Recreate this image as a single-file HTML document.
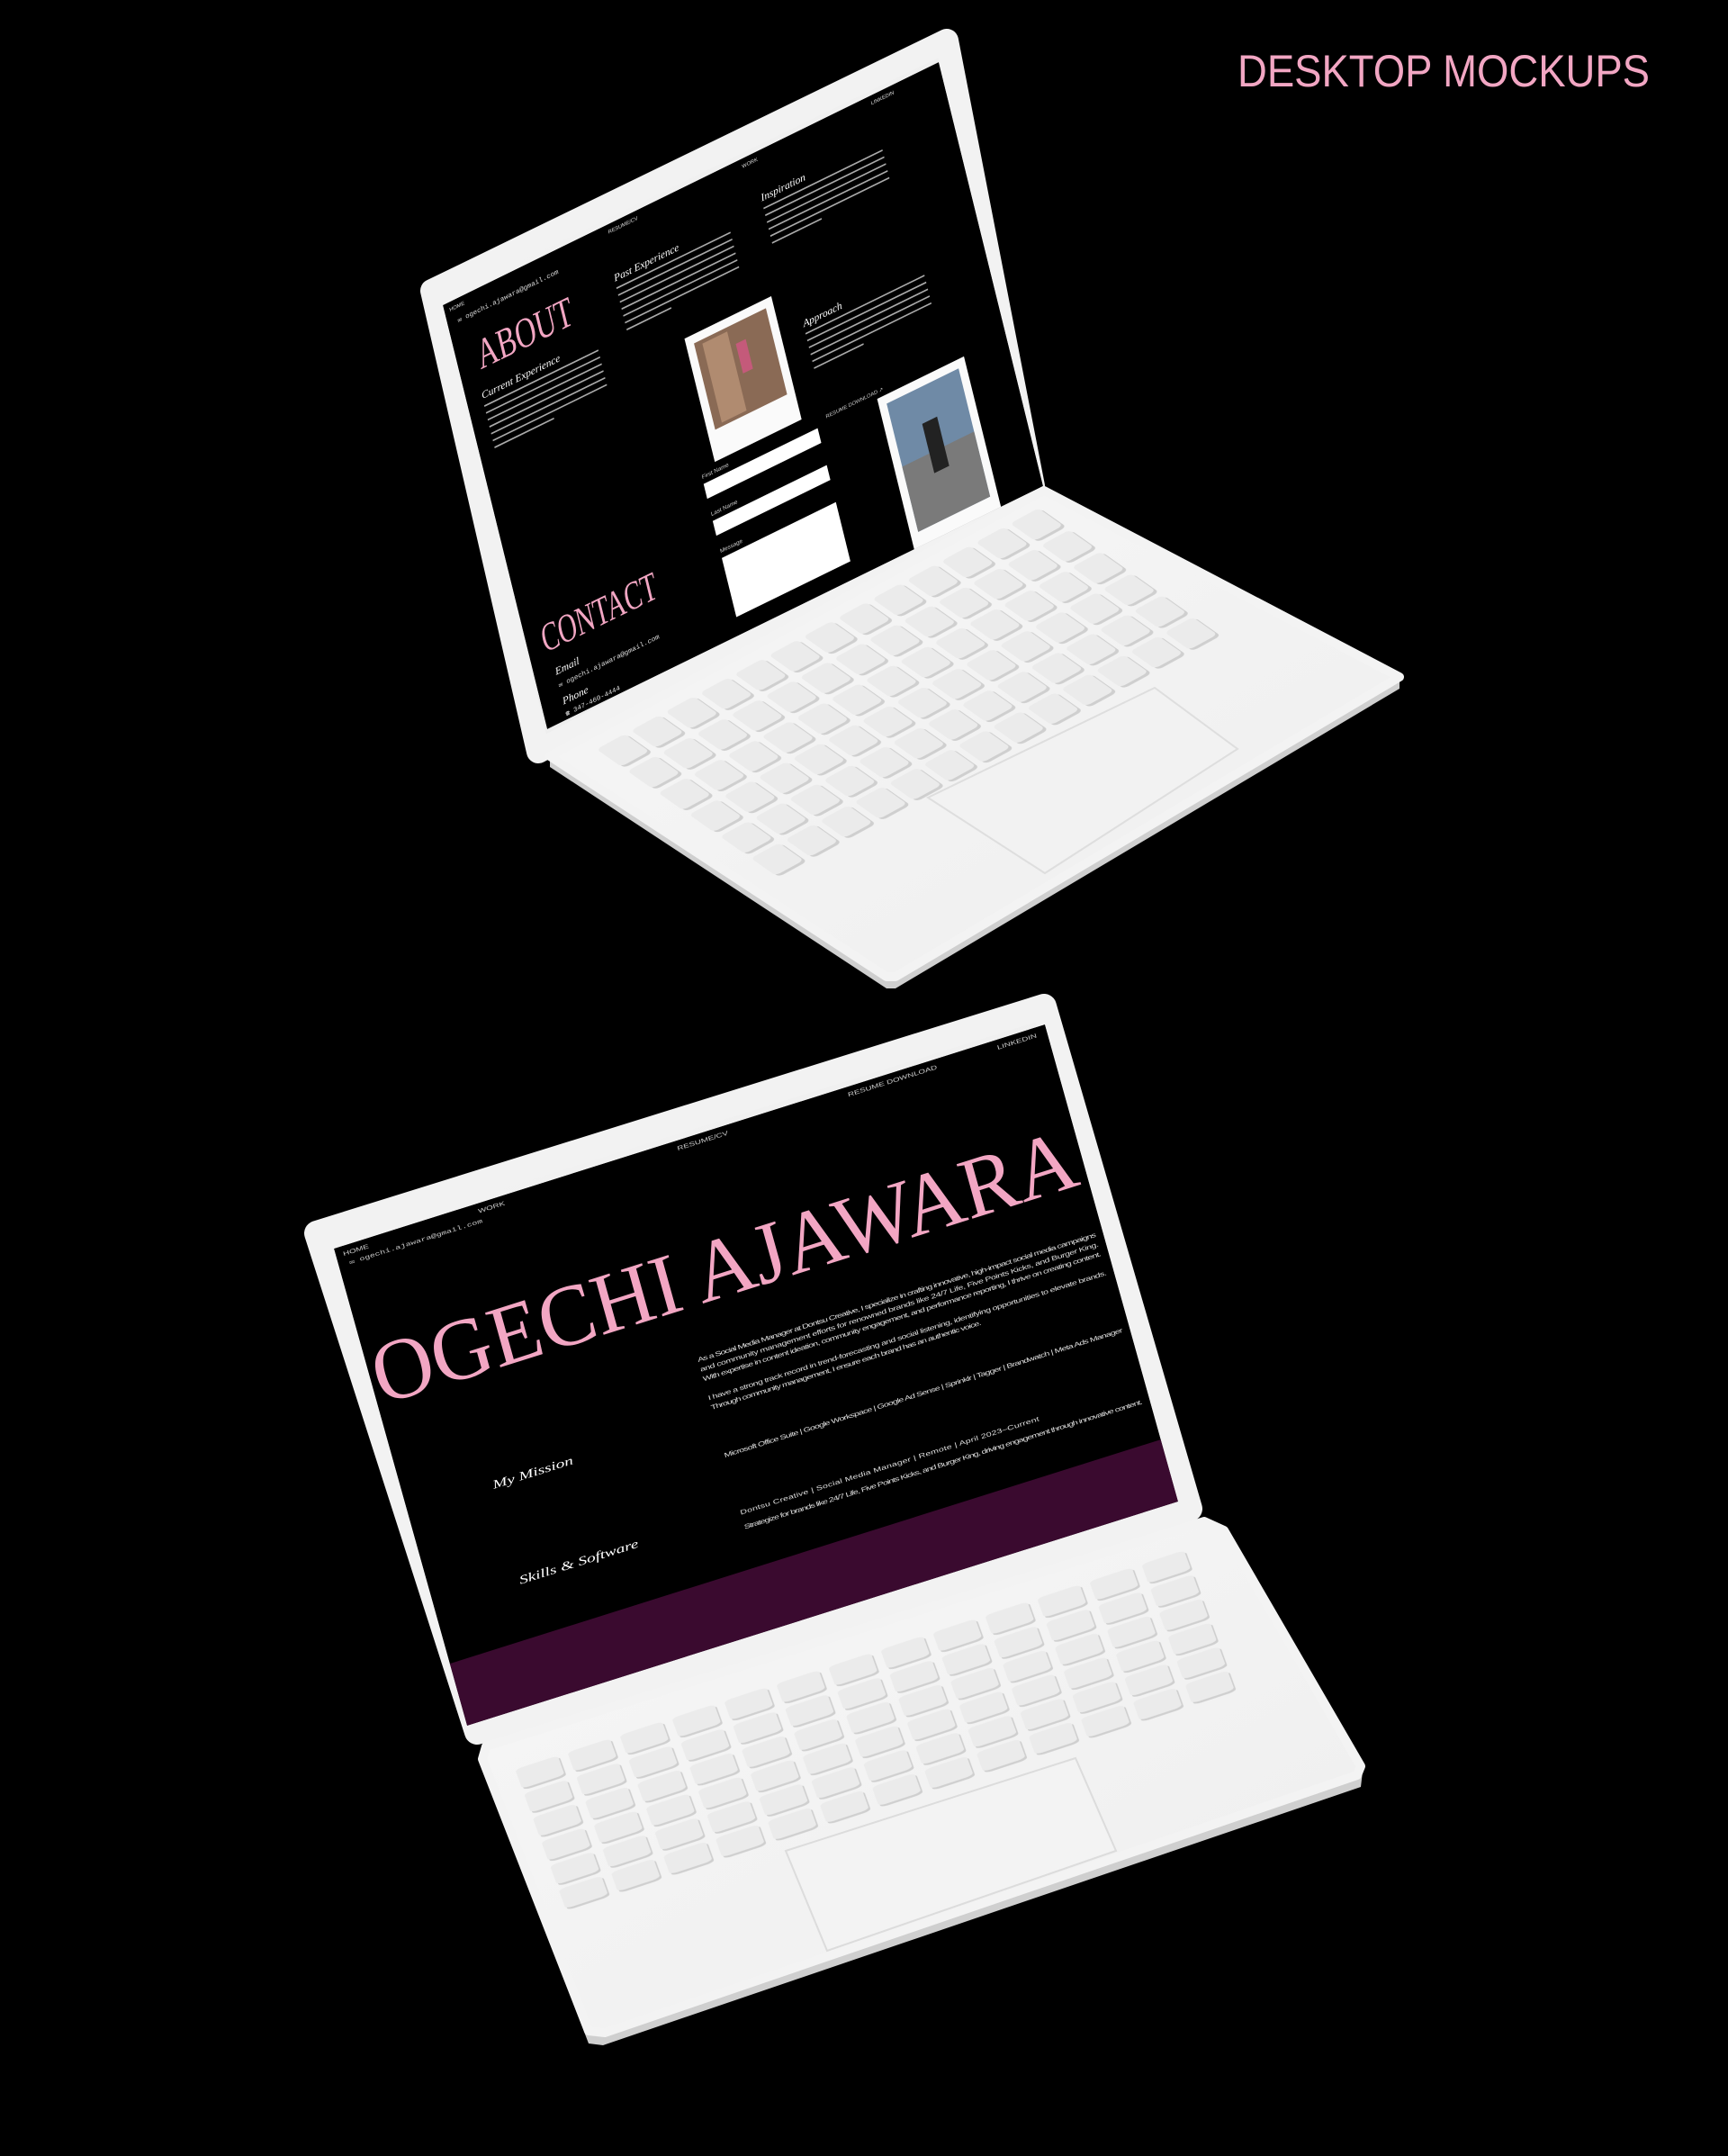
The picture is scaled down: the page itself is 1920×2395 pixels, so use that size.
<!DOCTYPE html>
<html><head><meta charset="utf-8"><style>
html,body{margin:0;padding:0;background:#000;}
svg{display:block}
</style></head><body>
<svg width="1920" height="2395" viewBox="0 0 1920 2395" xmlns="http://www.w3.org/2000/svg">
<defs>
<pattern id="keys1" patternUnits="userSpaceOnUse" width="7.6" height="10">
<rect x="0.8" y="1.4" width="6.2" height="8.2" rx="1" fill="#cfcfcf"/>
<rect x="0.6" y="0.8" width="6.2" height="8" rx="1" fill="#ebebeb"/>
</pattern>
<clipPath id="s1"><rect x="0" y="0" width="1000" height="860"/></clipPath>
<clipPath id="s2"><rect x="0" y="0" width="1000" height="1000"/></clipPath>
<linearGradient id="lid" x1="0" y1="0" x2="1" y2="1"><stop offset="0" stop-color="#f4f4f4"/><stop offset="1" stop-color="#e9e9e9"/></linearGradient>
<linearGradient id="base" x1="0" y1="0" x2="1" y2="1"><stop offset="0" stop-color="#f7f7f7"/><stop offset="1" stop-color="#eeeeee"/></linearGradient>
</defs>
<rect width="1920" height="2395" fill="#000"/>
<text x="1375" y="96" font-family="Liberation Sans, sans-serif" font-size="50" fill="#f2a6c3" textLength="458" lengthAdjust="spacingAndGlyphs">DESKTOP MOCKUPS</text>

<!-- LAPTOP 1 lid -->
<polygon points="480,323 1052,45 1148,540 598,835" fill="url(#lid)" stroke="#f2f2f2" stroke-width="26" stroke-linejoin="round"/>
<g transform="matrix(0.551,-0.270,0.1349,0.5477,492,339)">
<g clip-path="url(#s1)">
<rect x="0" y="0" width="1000" height="860" fill="#000"/>
<g font-family="Liberation Sans, sans-serif" fill="#ddd" font-size="10">
<text x="10" y="18">HOME</text><text x="330" y="18">RESUME/CV</text><text x="600" y="18">WORK</text><text x="860" y="18">LINKEDIN</text>
<text x="20" y="45" font-family="Liberation Mono, monospace" font-size="13">✉ ogechi.ajawara@gmail.com</text>
</g>
<text x="40" y="150" font-family="Liberation Serif, serif" font-size="82" fill="#f2a6c3" textLength="190" lengthAdjust="spacingAndGlyphs">ABOUT</text>
<g font-family="Liberation Serif, serif" font-style="italic" fill="#fff" font-size="20">
<text x="30" y="205">Current Experience</text><text x="320" y="110">Past Experience</text><text x="620" y="95">Inspiration</text><text x="640" y="360">Approach</text>
</g>
<g fill="#aaa">
<rect x="30" y="218" width="230" height="3"/><rect x="30" y="232" width="230" height="3"/><rect x="30" y="246" width="230" height="3"/><rect x="30" y="260" width="230" height="3"/><rect x="30" y="274" width="230" height="3"/><rect x="30" y="288" width="230" height="3"/><rect x="30" y="302" width="120" height="3"/>
<rect x="320" y="122" width="230" height="3"/><rect x="320" y="136" width="230" height="3"/><rect x="320" y="150" width="230" height="3"/><rect x="320" y="164" width="230" height="3"/><rect x="320" y="178" width="230" height="3"/><rect x="320" y="192" width="230" height="3"/><rect x="320" y="206" width="90" height="3"/>
<rect x="620" y="108" width="240" height="3"/><rect x="620" y="122" width="240" height="3"/><rect x="620" y="136" width="240" height="3"/><rect x="620" y="150" width="240" height="3"/><rect x="620" y="164" width="240" height="3"/><rect x="620" y="178" width="100" height="3"/>
<rect x="640" y="372" width="240" height="3"/><rect x="640" y="386" width="240" height="3"/><rect x="640" y="400" width="240" height="3"/><rect x="640" y="414" width="240" height="3"/><rect x="640" y="428" width="240" height="3"/><rect x="640" y="442" width="100" height="3"/>
</g>
<rect x="420" y="275" width="175" height="250" fill="#fafafa"/>
<rect x="435" y="292" width="145" height="175" fill="#8a6a55"/>
<rect x="450" y="300" width="50" height="160" fill="#b08b70"/>
<rect x="510" y="330" width="20" height="60" fill="#c45a7a"/>
<rect x="740" y="555" width="175" height="320" fill="#fafafa"/>
<rect x="755" y="572" width="145" height="260" fill="#6f8aa6"/>
<rect x="755" y="700" width="145" height="132" fill="#7a7a7a"/>
<rect x="810" y="640" width="30" height="100" fill="#222"/>
<text x="640" y="545" font-family="Liberation Sans, sans-serif" font-size="10" fill="#ccc">RESUME DOWNLOAD ↗</text>
<rect x="390" y="555" width="230" height="30" fill="#fff"/>
<rect x="390" y="630" width="230" height="30" fill="#fff"/>
<rect x="390" y="705" width="230" height="120" fill="#fff"/>
<g font-family="Liberation Sans, sans-serif" font-size="11" fill="#ccc"><text x="390" y="545">First Name</text><text x="390" y="620">Last Name</text><text x="390" y="695">Message</text></g>
<text x="30" y="720" font-family="Liberation Serif, serif" font-size="78" fill="#f2a6c3" textLength="230" lengthAdjust="spacingAndGlyphs">CONTACT</text>
<g font-family="Liberation Serif, serif" font-style="italic" fill="#fff" font-size="20"><text x="40" y="770">Email</text><text x="40" y="830">Phone</text></g>
<g font-family="Liberation Mono, monospace" font-size="13" fill="#ddd"><text x="40" y="795">✉ ogechi.ajawara@gmail.com</text><text x="40" y="853">☎ 347-460-4444</text></g>
</g>
</g>
<!-- base 1 -->
<polygon points="611,852 985,1098 995,1098 1555,765 1555,752 995,1085 985,1085 611,840" fill="#cfcfcf"/>
<polygon points="611,840 1160,545 1555,752 995,1085 985,1085" fill="url(#base)" stroke="#f3f3f3" stroke-width="10" stroke-linejoin="round"/>
<g transform="matrix(5.04,-2.75,3.43,2.42,657,832)">
<rect x="0" y="0" width="98.8" height="60" fill="url(#keys1)"/>
</g>
<polygon points="1031,886 1283,764 1375,832 1161,970" fill="#f2f2f2" stroke="#dedede" stroke-width="2"/>

<!-- LAPTOP 2 lid -->
<polygon points="352,1370 1160,1118 1322,1676 530,1924" fill="url(#lid)" stroke="#f2f2f2" stroke-width="28" stroke-linejoin="round"/>
<g transform="matrix(0.79,-0.249,0.148,0.53,371,1387)">
<g clip-path="url(#s2)">
<rect x="0" y="0" width="1000" height="1000" fill="#000"/>
<rect x="0" y="870" width="1000" height="130" fill="#3a0a2f"/>
<g font-family="Liberation Sans, sans-serif" fill="#ccc" font-size="12">
<text x="10" y="20">HOME</text><text x="200" y="20">WORK</text><text x="480" y="20">RESUME/CV</text><text x="720" y="20">RESUME DOWNLOAD</text><text x="930" y="20">LINKEDIN</text>
<text x="15" y="40" font-family="Liberation Mono, monospace">✉ ogechi.ajawara@gmail.com</text>
</g>
<text x="5" y="330" font-family="Liberation Serif, serif" font-size="175" fill="#f2a6c3" textLength="985" lengthAdjust="spacingAndGlyphs">OGECHI AJAWARA</text>
<g font-family="Liberation Sans, sans-serif" font-size="13" fill="#ddd" lengthAdjust="spacingAndGlyphs">
<text x="430" y="440" textLength="560">As a Social Media Manager at Dontsu Creative, I specialize in crafting innovative, high-impact social media campaigns</text>
<text x="430" y="460" textLength="560">and community management efforts for renowned brands like 24/7 Life, Five Points Kicks, and Burger King.</text>
<text x="430" y="480" textLength="560">With expertise in content ideation, community engagement, and performance reporting, I thrive on creating content.</text>
<text x="430" y="520" textLength="560">I have a strong track record in trend-forecasting and social listening, identifying opportunities to elevate brands.</text>
<text x="430" y="540" textLength="380">Through community management, I ensure each brand has an authentic voice.</text>
<text x="430" y="640" textLength="560">Microsoft Office Suite | Google Workspace | Google Ad Sense | Sprinklr | Tagger | Brandwatch | Meta Ads Manager</text>
<text x="430" y="760" textLength="420">Dontsu Creative | Social Media Manager | Remote | April 2023–Current</text>
<text x="430" y="790" textLength="560">Strategize for brands like 24/7 Life, Five Points Kicks, and Burger King, driving engagement through innovative content.</text>
</g>
<g font-family="Liberation Serif, serif" font-style="italic" fill="#fff" font-size="24"><text x="120" y="560">My Mission</text><text x="120" y="760">Skills &amp; Software</text></g>
</g>
</g>
<!-- base 2 -->
<polygon points="536,1960 654,2270 670,2272 1512,1985 1514,1968 670,2258 654,2256 536,1948" fill="#cfcfcf"/>
<polygon points="540,1940 1338,1690 1360,1700 1512,1962 1508,1972 672,2258 654,2256 536,1954" fill="url(#base)" stroke="#f3f3f3" stroke-width="10" stroke-linejoin="round"/>
<g transform="matrix(7.63,-2.5,0.967,2.667,567,1965)">
<rect x="0" y="0" width="98.8" height="60" fill="url(#keys1)"/>
</g>
<polygon points="873,2056 1195,1953 1240,2056 919,2167" fill="#f3f3f3" stroke="#dcdcdc" stroke-width="2"/>
</svg>
</body></html>
